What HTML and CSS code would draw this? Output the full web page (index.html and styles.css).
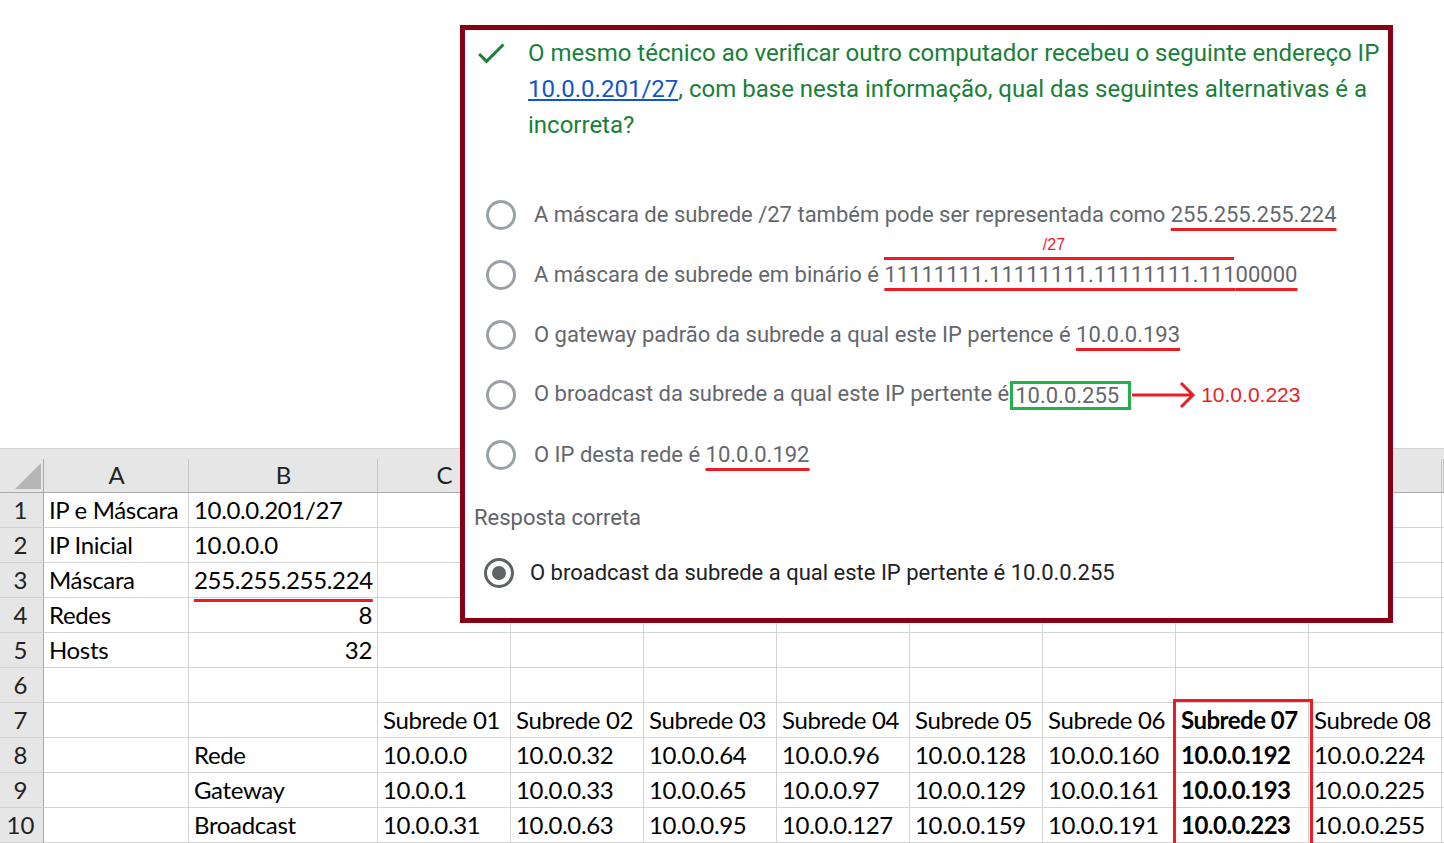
FILE: index.html
```html
<!DOCTYPE html>
<html lang="pt">
<head>
<meta charset="utf-8">
<title>Subredes</title>
<link rel="stylesheet" href="styles.css">
</head>
<body>
<div class="page">
  <div class="sheet">
    <div class="hd corner"></div><div class="hd">A</div><div class="hd">B</div><div class="hd">C</div><div class="hd"></div><div class="hd"></div><div class="hd"></div><div class="hd"></div><div class="hd"></div><div class="hd"></div><div class="hd"></div><div class="hd"></div>

    <div class="rn">1</div><div class="c">IP e Máscara</div><div class="c">10.0.0.201/27</div><div class="c"></div><div class="c"></div><div class="c"></div><div class="c"></div><div class="c"></div><div class="c"></div><div class="c"></div><div class="c"></div><div class="c"></div>

    <div class="rn">2</div><div class="c">IP Inicial</div><div class="c">10.0.0.0</div><div class="c"></div><div class="c"></div><div class="c"></div><div class="c"></div><div class="c"></div><div class="c"></div><div class="c"></div><div class="c"></div><div class="c"></div>

    <div class="rn">3</div><div class="c">Máscara</div><div class="c r"><span class="mark">255.255.255.224</span></div><div class="c"></div><div class="c"></div><div class="c"></div><div class="c"></div><div class="c"></div><div class="c"></div><div class="c"></div><div class="c"></div><div class="c"></div>

    <div class="rn">4</div><div class="c">Redes</div><div class="c r">8</div><div class="c"></div><div class="c"></div><div class="c"></div><div class="c"></div><div class="c"></div><div class="c"></div><div class="c"></div><div class="c"></div><div class="c"></div>

    <div class="rn">5</div><div class="c">Hosts</div><div class="c r">32</div><div class="c"></div><div class="c"></div><div class="c"></div><div class="c"></div><div class="c"></div><div class="c"></div><div class="c"></div><div class="c"></div><div class="c"></div>

    <div class="rn">6</div><div class="c"></div><div class="c"></div><div class="c"></div><div class="c"></div><div class="c"></div><div class="c"></div><div class="c"></div><div class="c"></div><div class="c"></div><div class="c"></div><div class="c"></div>

    <div class="rn">7</div><div class="c"></div><div class="c"></div><div class="c">Subrede 01</div><div class="c">Subrede 02</div><div class="c">Subrede 03</div><div class="c">Subrede 04</div><div class="c">Subrede 05</div><div class="c">Subrede 06</div><div class="c b hl">Subrede 07</div><div class="c">Subrede 08</div><div class="c"></div>

    <div class="rn">8</div><div class="c"></div><div class="c">Rede</div><div class="c">10.0.0.0</div><div class="c">10.0.0.32</div><div class="c">10.0.0.64</div><div class="c">10.0.0.96</div><div class="c">10.0.0.128</div><div class="c">10.0.0.160</div><div class="c b">10.0.0.192</div><div class="c">10.0.0.224</div><div class="c"></div>

    <div class="rn">9</div><div class="c"></div><div class="c">Gateway</div><div class="c">10.0.0.1</div><div class="c">10.0.0.33</div><div class="c">10.0.0.65</div><div class="c">10.0.0.97</div><div class="c">10.0.0.129</div><div class="c">10.0.0.161</div><div class="c b">10.0.0.193</div><div class="c">10.0.0.225</div><div class="c"></div>

    <div class="rn">10</div><div class="c"></div><div class="c">Broadcast</div><div class="c">10.0.0.31</div><div class="c">10.0.0.63</div><div class="c">10.0.0.95</div><div class="c">10.0.0.127</div><div class="c">10.0.0.159</div><div class="c">10.0.0.191</div><div class="c b">10.0.0.223</div><div class="c">10.0.0.255</div><div class="c"></div>
  </div>

  <div class="quiz">
    <div class="question">
      <svg class="check" viewBox="0 0 24 24" width="36" height="36"><path d="M9 16.2L4.8 12l-1.4 1.4L9 19 21 7l-1.4-1.4L9 16.2z"/></svg>
      <div class="qtext">O mesmo técnico ao verificar outro computador recebeu o seguinte endereço IP<br><a class="link">10.0.0.201/27</a>, com base nesta informação, qual das seguintes alternativas é a<br>incorreta?</div>
    </div>

    <div class="options">
      <div class="opt"><span class="radio"></span><span class="otext">A máscara de subrede /27 também pode ser representada como <span class="uline">255.255.255.224</span></span></div>
      <div class="opt"><span class="radio"></span><span class="otext">A máscara de subrede em binário é <span class="uline"><span class="over"><span class="note">/27</span>11111111.11111111.11111111.111</span>00000</span></span></div>
      <div class="opt"><span class="radio"></span><span class="otext">O gateway padrão da subrede a qual este IP pertence é <span class="uline">10.0.0.193</span></span></div>
      <div class="opt"><span class="radio"></span><span class="otext">O broadcast da subrede a qual este IP pertente é<span class="gbox">10.0.0.255</span><svg class="arrow" width="64" height="30" viewBox="0 0 64 30"><path d="M0 15H61M49 3L61 15L49 27" fill="none" stroke="#ed1c24" stroke-width="3"/></svg><span class="fix">10.0.0.223</span></span></div>
      <div class="opt"><span class="radio"></span><span class="otext">O IP desta rede é <span class="uline">10.0.0.192</span></span></div>
    </div>

    <div class="answer-label">Resposta correta</div>
    <div class="answer"><span class="radio on"></span><span class="atext">O broadcast da subrede a qual este IP pertente é 10.0.0.255</span></div>
  </div>
</div>
</body>
</html>
```

FILE: styles.css
```css
* { box-sizing: border-box; }
html, body { margin: 0; padding: 0; background: #fff; }
.page { position: relative; width: 1444px; height: 843px; overflow: hidden; }

/* spreadsheet */
.sheet {
  margin-top: 448px;
  display: grid;
  grid-template-columns: 44px 145px 189px repeat(8, 133px) 2px;
  grid-template-rows: 45px repeat(10, 35px);
  font-family: Lato, "Liberation Sans", sans-serif;
  font-size: 24px;
  color: #000;
}
.hd {
  position: relative;
  background: #e6e6e6;
  border-top: 1px solid #d2d2d2;
  border-bottom: 1px solid #a9a9a9;
  color: #222;
  display: flex;
  align-items: flex-end;
  justify-content: center;
  line-height: 35px;
  overflow: hidden;
}
.hd::after {
  content: "";
  position: absolute;
  right: 0;
  top: 10px;
  bottom: 0;
  width: 1px;
  background: #c6c6c6;
}
.corner::after { background: #a9a9a9; }
.corner::before {
  content: "";
  position: absolute;
  right: 3px;
  bottom: 3px;
  width: 0;
  height: 0;
  border-left: 26px solid transparent;
  border-bottom: 26px solid #b5b5b5;
}
.rn {
  background: #e6e6e6;
  border-right: 1px solid #a9a9a9;
  border-bottom: 1px solid #d0d0d0;
  color: #222;
  text-align: center;
  line-height: 34px;
  padding-right: 2px;
}
.c {
  border-right: 1px solid #d4d4d4;
  border-bottom: 1px solid #d4d4d4;
  line-height: 34px;
  padding: 0 5px;
  white-space: nowrap;
  letter-spacing: -0.35px;
}
.c.r { text-align: right; }
.c.b { font-weight: 700; letter-spacing: -0.5px; }
.c.hl { position: relative; }
.c.hl::after {
  content: "";
  position: absolute;
  left: -3px;
  top: -4px;
  width: 134px;
  height: 150px;
  border: 3px solid #ed1c24;
  z-index: 1;
}
.mark {
  text-decoration: underline 3px #ed1c24;
  text-underline-offset: 10px;
  text-decoration-skip-ink: none;
}

/* quiz card */
.quiz {
  position: absolute;
  left: 460px;
  top: 25px;
  width: 933px;
  height: 598px;
  border: 5px solid #880015;
  background: #fff;
  z-index: 2;
  font-family: Roboto, "Liberation Sans", sans-serif;
  display: flex;
  flex-direction: column;
}
.question {
  display: flex;
  align-items: flex-start;
  gap: 19px;
  padding: 5px 0 0 8px;
}
.check { fill: #188038; flex: none; }
.qtext {
  font-size: 24px;
  line-height: 36px;
  color: #188038;
  white-space: nowrap;
}
.link { color: #1155cc; text-decoration: underline; }

.options { margin-top: 42px; display: flex; flex-direction: column; }
.opt {
  height: 60px;
  display: flex;
  align-items: center;
  gap: 18px;
  padding-left: 21px;
}
.radio {
  flex: none;
  width: 30px;
  height: 30px;
  border: 3px solid #9aa0a6;
  border-radius: 50%;
  display: flex;
  align-items: center;
  justify-content: center;
}
.radio.on { border-color: #5f6368; }
.radio.on::after {
  content: "";
  width: 14px;
  height: 14px;
  border-radius: 50%;
  background: #5f6368;
}
.otext {
  display: block;
  font-size: 22px;
  line-height: 24px;
  color: #63676c;
  white-space: nowrap;
}
.uline {
  text-decoration: underline 3px #ed1c24;
  text-underline-offset: 6px;
  text-decoration-skip-ink: none;
}
.over { position: relative; }
.over::before {
  content: "";
  position: absolute;
  left: 0;
  right: 2px;
  top: -5px;
  height: 3px;
  background: #ed1c24;
}
.note {
  position: absolute;
  left: 0;
  right: 12px;
  top: -26px;
  text-align: center;
  font-family: "Liberation Sans", Arial, sans-serif;
  font-size: 16px;
  line-height: 18px;
  color: #ed1c24;
}
.gbox {
  display: inline-block;
  border: 3px solid #22b14c;
  line-height: 23px;
  padding: 0 9px 0 2px;
  margin-left: 1px;
  vertical-align: middle;
}
.arrow { vertical-align: middle; margin-left: 1px; }
.fix {
  margin-left: 5px;
  font-family: "Liberation Sans", Arial, sans-serif;
  font-size: 21px;
  color: #ed1c24;
  vertical-align: middle;
}

.answer-label {
  margin-top: 21px;
  padding-left: 9px;
  font-size: 22px;
  line-height: 24px;
  color: #5f6368;
}
.answer {
  margin-top: 19px;
  height: 48px;
  display: flex;
  align-items: center;
  gap: 16px;
  padding-left: 19px;
}
.atext {
  font-size: 22px;
  line-height: 24px;
  color: #202124;
  white-space: nowrap;
}
```
